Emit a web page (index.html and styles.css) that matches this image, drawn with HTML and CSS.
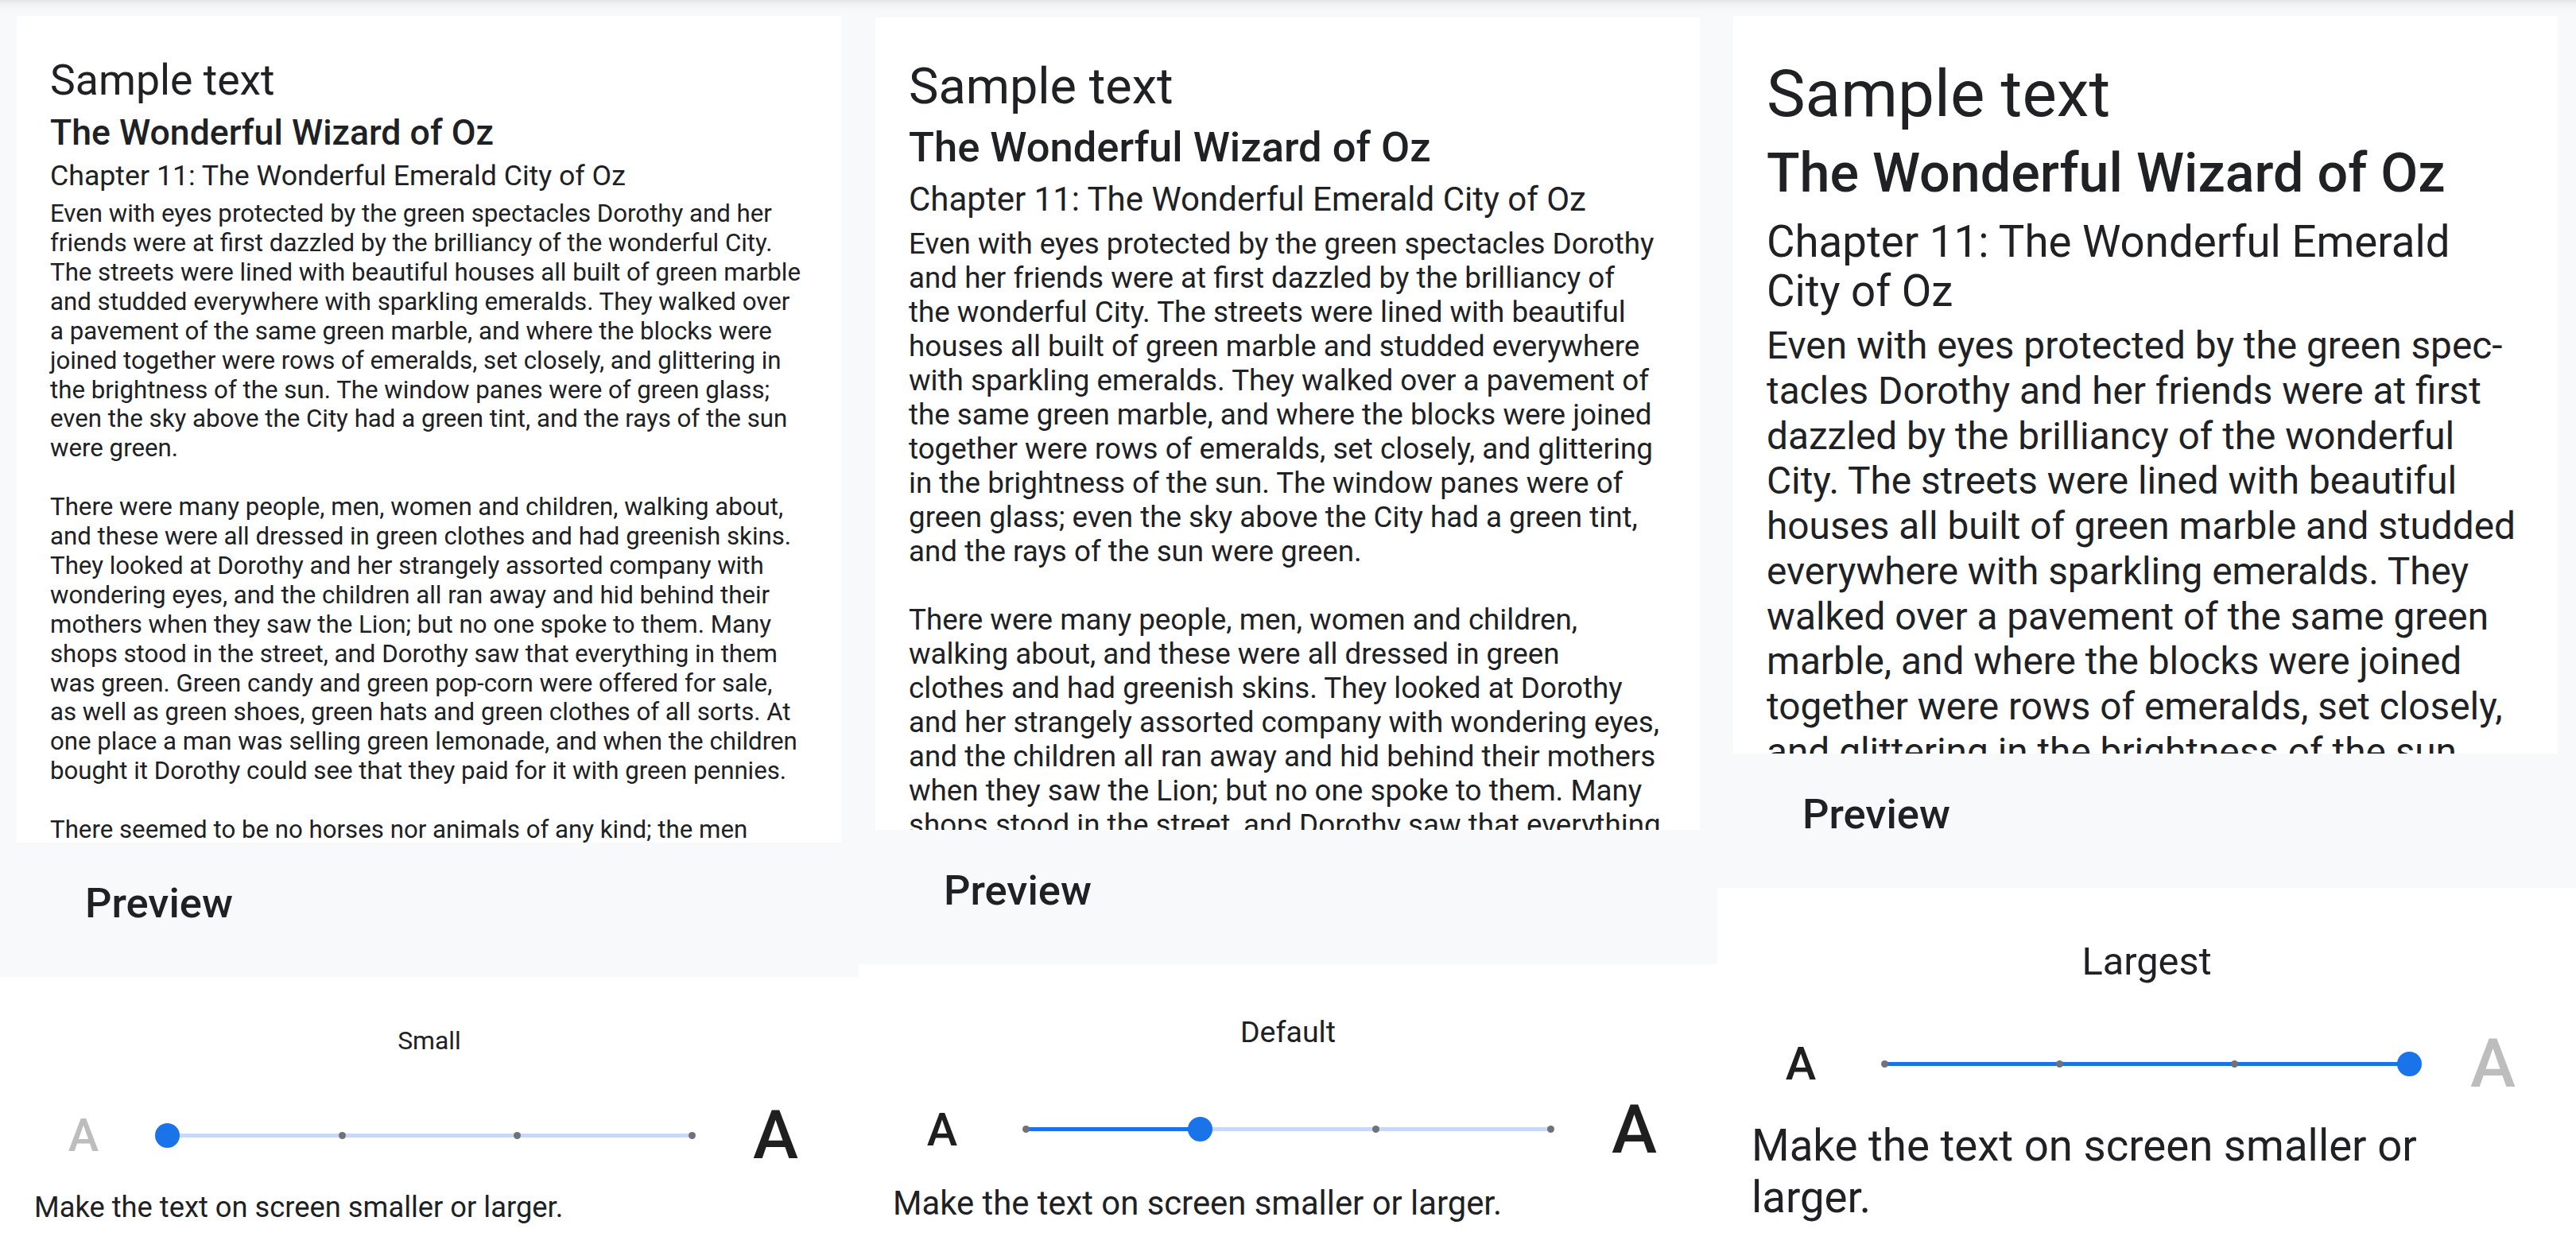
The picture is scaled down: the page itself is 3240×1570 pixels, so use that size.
FILE: index.html
```html
<!DOCTYPE html>
<html lang="en">
<head>
    <meta charset="UTF-8">
    <title>Font size</title>
    <link rel="stylesheet" href="styles.css">
</head>
<body>
<div class="screens">

    <section class="screen small">
        <div class="preview-card">
            <div class="sample-title">Sample text</div>
            <div class="book-title">The Wonderful Wizard of Oz</div>
            <div class="chapter-title">Chapter 11: The Wonderful Emerald City of Oz</div>
            <p>Even with eyes protected by the green spec&shy;tacles Dorothy and her friends were at first dazzled by the brilliancy of the wonderful City. The streets were lined with beautiful houses all built of green marble and studded everywhere with sparkling emeralds. They walked over a pavement of the same green marble, and where the blocks were joined together were rows of emeralds, set closely, and glittering in the brightness of the sun. The window panes were of green glass; even the sky above the City had a green tint, and the rays of the sun were green.</p>
            <p>There were many people, men, women and children, walking about, and these were all dressed in green clothes and had greenish skins. They looked at Dorothy and her strangely assorted company with wondering eyes, and the children all ran away and hid behind their mothers when they saw the Lion; but no one spoke to them. Many shops stood in the street, and Dorothy saw that everything in them was green. Green candy and green pop-corn were offered for sale,<br>as well as green shoes, green hats and green clothes of all sorts. At one place a man was selling green lemonade, and when the children bought it Dorothy could see that they paid for it with green pennies.</p>
            <p>There seemed to be no horses nor animals of any kind; the men carried things around in little green carts, which they pushed before them. Everyone seemed happy and contented and prosperous.</p>
        </div>
        <div class="preview-header">Preview</div>
        <div class="controls">
            <div class="size-label">Small</div>
            <div class="slider">
                <span class="glyph glyph-small off">A</span>
                <div class="seek">
                    <div class="rail"><div class="fill" style="width: 0%"></div></div>
                    <div class="ticks"><i></i><i></i><i></i><i></i></div>
                    <div class="thumb" style="left: 0%"></div>
                </div>
                <span class="glyph glyph-large">A</span>
            </div>
            <div class="summary">Make the text on screen smaller or larger.</div>
        </div>
    </section>

    <section class="screen default">
        <div class="preview-card">
            <div class="sample-title">Sample text</div>
            <div class="book-title">The Wonderful Wizard of Oz</div>
            <div class="chapter-title">Chapter 11: The Wonderful Emerald City of Oz</div>
            <p>Even with eyes protected by the green spec&shy;tacles Dorothy and her friends were at first dazzled by the brilliancy of<br>the wonderful City. The streets were lined with beautiful houses all built of green marble and studded everywhere with sparkling emeralds. They walked over a pavement of the same green marble, and where the blocks were joined together were rows of emeralds, set closely, and glittering in the brightness of the sun. The window panes were of green glass; even the sky above the City had a green tint, and the rays of the sun were green.</p>
            <p>There were many people, men, women and children, walking about, and these were all dressed in green<br>clothes and had greenish skins. They looked at Dorothy and her strangely assorted company with wondering eyes, and the children all ran away and hid behind their mothers when they saw the Lion; but no one spoke to them. Many shops stood in the street, and Dorothy saw that everything in them was green. Green candy and green pop-corn were offered for sale, as well as green shoes, green hats and green clothes of all sorts.</p>
        </div>
        <div class="preview-header">Preview</div>
        <div class="controls">
            <div class="size-label">Default</div>
            <div class="slider">
                <span class="glyph glyph-small">A</span>
                <div class="seek">
                    <div class="rail"><div class="fill" style="width: 33.333%"></div></div>
                    <div class="ticks"><i></i><i></i><i></i><i></i></div>
                    <div class="thumb" style="left: 33.333%"></div>
                </div>
                <span class="glyph glyph-large">A</span>
            </div>
            <div class="summary">Make the text on screen smaller or larger.</div>
        </div>
    </section>

    <section class="screen largest">
        <div class="preview-card">
            <div class="sample-title">Sample text</div>
            <div class="book-title">The Wonderful Wizard of Oz</div>
            <div class="chapter-title">Chapter 11: The Wonderful Emerald City of Oz</div>
            <p>Even with eyes protected by the green spec&shy;tacles Dorothy and her friends were at first dazzled by the brilliancy of the wonderful City. The streets were lined with beautiful houses all built of green marble and studded everywhere with sparkling emeralds. They walked over a pavement of the same green marble, and where the blocks were joined together were rows of emeralds, set closely, and glittering in the brightness of the sun. The window panes were of green glass; even the sky above the City had a green tint, and the rays of the sun were green.</p>
        </div>
        <div class="preview-header">Preview</div>
        <div class="controls">
            <div class="size-label">Largest</div>
            <div class="slider">
                <span class="glyph glyph-small">A</span>
                <div class="seek">
                    <div class="rail"><div class="fill" style="width: 100%"></div></div>
                    <div class="ticks"><i></i><i></i><i></i><i></i></div>
                    <div class="thumb" style="left: 100%"></div>
                </div>
                <span class="glyph glyph-large off">A</span>
            </div>
            <div class="summary">Make the text on screen smaller or larger.</div>
        </div>
    </section>

</div>
</body>
</html>
```

FILE: styles.css
```css
html, body {
    margin: 0;
    padding: 0;
}
body {
    font-family: Roboto, "Noto Sans", "Liberation Sans", sans-serif;
    color: #202124;
    background: #ffffff;
}
.screens {
    display: flex;
    width: 3240px;
    height: 1570px;
    overflow: hidden;
}
.screen {
    --s: 1;
    width: 1080px;
    height: 1570px;
    display: flex;
    flex-direction: column;
    background: linear-gradient(to bottom, #e4e5e7 0px, #f1f2f4 6px, #f8f9fa 14px);
    overflow: hidden;
}
.screen.small {
    --s: 0.85;
}
.screen.largest {
    --s: 1.3;
}

/* sample text card */
.preview-card {
    flex: none;
    background: #ffffff;
    margin: 20px 22px 0 21px;
    padding: 50px 42px 0 42px;
    overflow: hidden;
    box-sizing: border-box;
}
.small .preview-card {
    height: 1040px;
}
.default .preview-card {
    height: 1022px;
    margin-top: 22px;
}
.largest .preview-card {
    height: 928px;
    margin-left: 20px;
    margin-right: 23px;
}
.sample-title {
    font-size: calc(63px * var(--s));
    line-height: 1.172;
}
.book-title {
    font-size: calc(52.5px * var(--s));
    font-weight: 500;
    line-height: 1.172;
    margin-top: calc(9.5px * var(--s));
}
.chapter-title {
    font-size: calc(42px * var(--s));
    line-height: 1.172;
    margin-top: calc(9.5px * var(--s));
}
.largest .chapter-title {
    line-height: 62.3px;
    margin-top: 14.5px;
}
.preview-card p {
    font-size: calc(36.75px * var(--s));
    line-height: 43px;
    margin: 0 0 43px 0;
}
.small .preview-card p {
    line-height: 36.9px;
    margin-bottom: 36.9px;
}
.largest .preview-card p {
    line-height: 56.8px;
    margin-bottom: 56.8px;
}
.preview-card .chapter-title + p {
    margin-top: calc(9.5px * var(--s));
}
.largest .preview-card .chapter-title + p {
    margin-top: 9.5px;
}

/* grey category header */
.preview-header {
    flex: none;
    height: 169px;
    box-sizing: border-box;
    padding: 46px 0 0 107px;
    font-size: 52.5px;
    font-weight: 500;
    line-height: 1.172;
}

/* size picker */
.controls {
    flex: 1;
    background: #ffffff;
    padding: 62px 40px 0 43px;
}
.default .controls,
.largest .controls {
    padding-top: 64px;
}
.size-label {
    text-align: center;
    margin-left: -43px;
    margin-right: -40px;
    font-size: calc(37.5px * var(--s));
    line-height: 1.172;
}
.slider {
    display: flex;
    align-items: center;
    height: 100px;
    margin: 50px 0 0 22px;
}
.glyph {
    width: 80px;
    text-align: center;
    font-weight: 500;
    color: #1f1f1f;
    line-height: 1;
}
.glyph.off {
    color: #bdbdbd;
}
.glyph-small {
    font-size: 58px;
}
.glyph-large {
    font-size: 86px;
    width: 81px;
}
.seek {
    position: relative;
    width: 660px;
    height: 32px;
    margin: 0 65px;
}
.rail {
    position: absolute;
    left: 0;
    right: 0;
    top: 50%;
    height: 5px;
    margin-top: -2.5px;
    background: #c6daf7;
    border-radius: 3px;
}
.fill {
    height: 100%;
    background: #1a73e8;
    border-radius: 3px;
}
.ticks {
    position: absolute;
    left: -4.5px;
    right: -4.5px;
    top: 0;
    bottom: 0;
    display: flex;
    justify-content: space-between;
    align-items: center;
}
.ticks i {
    width: 9px;
    height: 9px;
    border-radius: 50%;
    background: #6f7378;
}
.thumb {
    position: absolute;
    top: 50%;
    width: 31px;
    height: 31px;
    margin: -15.5px 0 0 -15.5px;
    border-radius: 50%;
    background: #1a73e8;
}
.summary {
    margin-top: 18px;
    font-size: 41.8px;
    line-height: 1.172;
}
.small .summary {
    margin-top: 20px;
    font-size: 36.3px;
}
.largest .summary {
    margin-top: 21px;
    font-size: 54.6px;
    line-height: 1.19;
}
```
